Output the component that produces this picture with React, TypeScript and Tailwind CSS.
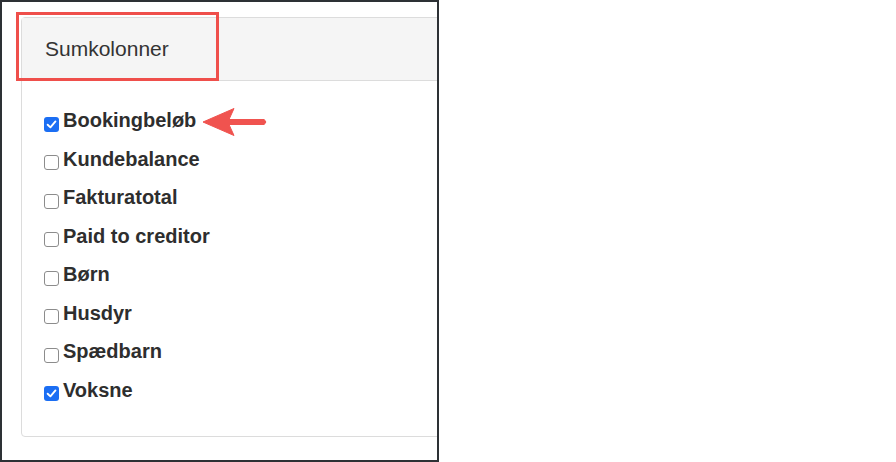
const items = [
  { label: "Bookingbeløb", checked: true },
  { label: "Kundebalance", checked: false },
  { label: "Fakturatotal", checked: false },
  { label: "Paid to creditor", checked: false },
  { label: "Børn", checked: false },
  { label: "Husdyr", checked: false },
  { label: "Spædbarn", checked: false },
  { label: "Voksne", checked: true },
]

function Box({ checked }: { checked: boolean }) {
  if (checked) {
    return (
      <span className="mt-[8px] flex h-[15px] w-[15px] shrink-0 items-center justify-center rounded-[3px] bg-[#1b6ef3]">
        <svg width="11" height="11" viewBox="0 0 10 10">
          <path d="M1.5 5.2 L4 7.6 L8.6 2.2" fill="none" stroke="white" strokeWidth="1.7" strokeLinecap="round" strokeLinejoin="round" />
        </svg>
      </span>
    )
  }
  return <span className="mt-[8px] h-[15px] w-[15px] shrink-0 rounded-[3px] border border-[#8c8c8c] bg-white" />
}

export default function App() {
  return (
    <div className="h-[462px] w-[896px] bg-white font-['Liberation_Sans',Arial,sans-serif] text-[#2e2e2e]">
      <div className="relative h-[462px] w-[439px] overflow-hidden border-2 border-[#2d3135] bg-white pl-[19px] pt-[15px]">
        <div className="w-[460px] rounded-[4px] border border-[#dcdcdc]">
          <div className="flex h-[63px] items-center border-b border-[#dcdcdc] bg-[#f5f5f5] pl-[23px] text-[21px] text-[#333]">
            Sumkolonner
          </div>
          <div className="pb-[27px] pl-[22px] pt-[20px]">
            {items.map((it) => (
              <label key={it.label} className="flex h-[38.5px] items-center gap-[4px] text-[20px] font-bold">
                <Box checked={it.checked} />
                <span>{it.label}</span>
              </label>
            ))}
          </div>
        </div>

        <div className="absolute left-[14px] top-[10px] h-[69px] w-[203px] border-[3px] border-[#ef4f4b]" />

        <svg className="absolute -left-[2px] -top-[2px]" width="439" height="462" viewBox="0 0 439 462">
          <path
            d="M203 122 L234 108.5 L229 119.5 L264 119.5 Q267.5 122 264 124.5 L229 124.5 L234 135.5 Z"
            fill="#f0534f"
            stroke="#f0534f"
            strokeWidth="1"
            strokeLinejoin="round"
          />
        </svg>
      </div>
    </div>
  )
}
